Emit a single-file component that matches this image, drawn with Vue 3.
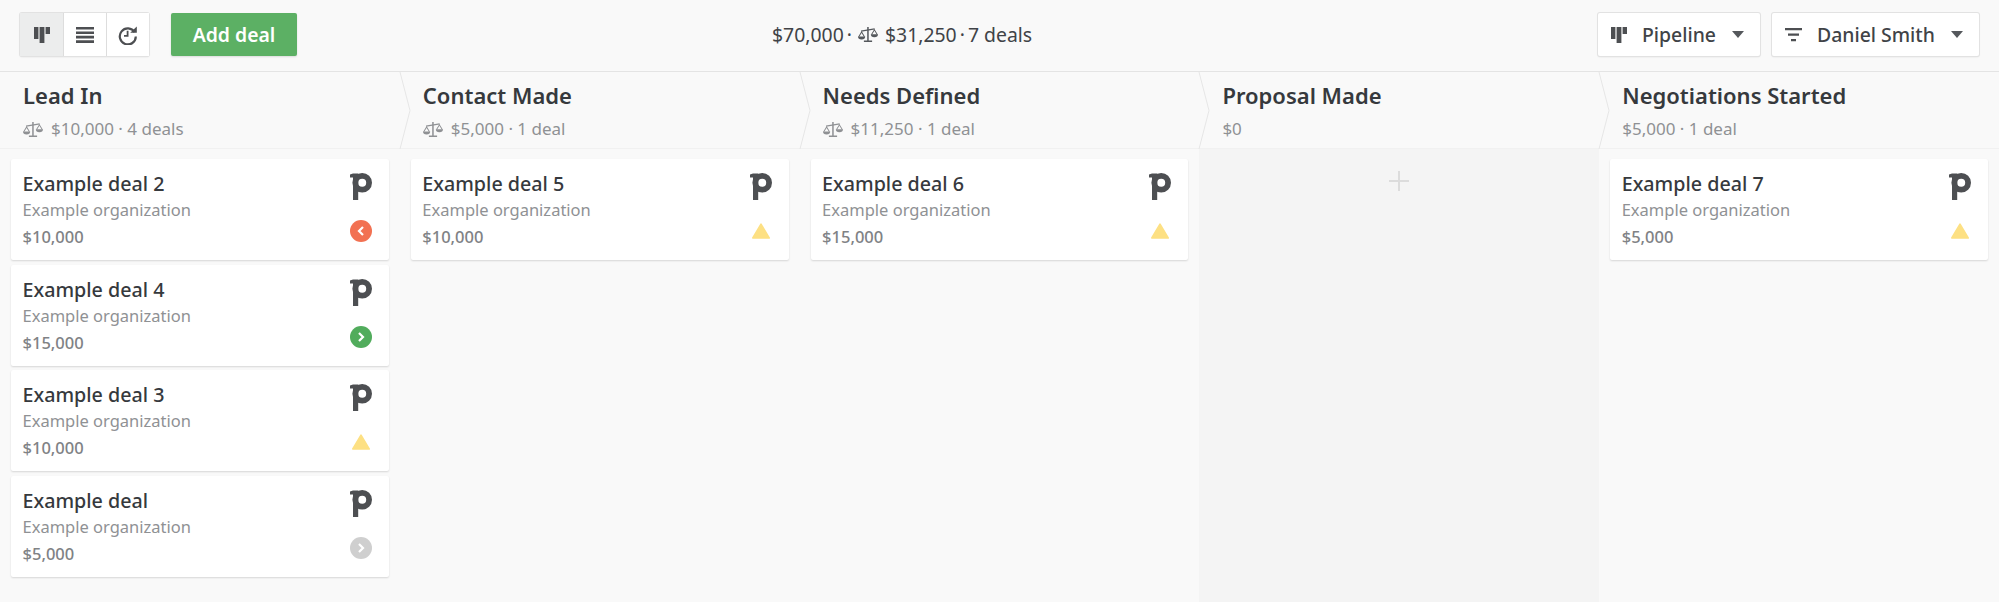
<template>
  <div class="page">
    <header class="topbar">
      <div class="left">
        <div class="views">
          <button type="button" class="view active" aria-label="Pipeline view">
            <svg width="16" height="16" viewBox="0 0 16 16"><path d="M0 0h4.4v12H0zM5.6 0h4.8v16H5.6zM11.6 0H16v7h-4.4z" /></svg>
          </button>
          <button type="button" class="view" aria-label="List view">
            <svg width="18" height="16" viewBox="0 0 18 16"><path d="M0 0h18v2.6H0zM0 4.4h18V7H0zM0 8.8h18v2.6H0zM0 13.2h18V16H0z" /></svg>
          </button>
          <button type="button" class="view" aria-label="Forecast view">
            <svg width="20" height="20" viewBox="0 0 20 20">
              <path class="line" d="M16.6 7.2A8 8 0 1 0 17.8 11.5" />
              <path d="M12.2 7.8h6.6V1.4z" />
              <path class="line thin" d="M9.6 5.8v5h-3.6" />
            </svg>
          </button>
        </div>
        <button type="button" class="add">Add deal</button>
      </div>
      <div class="summary">
        <span>$70,000</span><i>·</i>
        <svg class="scale" width="20" height="17" viewBox="0 0 20 17"><use href="#scales" /></svg>
        <span>$31,250</span><i>·</i><span>7 deals</span>
      </div>
      <div class="right">
        <button type="button" class="select pipeline">
          <svg width="16" height="16" viewBox="0 0 16 16"><path d="M0 0h4.4v12H0zM5.6 0h4.8v16H5.6zM11.6 0H16v7h-4.4z" /></svg>
          <span>Pipeline</span>
          <b class="caret"></b>
        </button>
        <button type="button" class="select owner">
          <svg width="17" height="14" viewBox="0 0 17 14"><path d="M0 0h17v2.2H0zM3 5.6h11v2.2H3zM6 11h5v2.2H6z" /></svg>
          <span>Daniel Smith</span>
          <b class="caret"></b>
        </button>
      </div>
    </header>

    <svg width="0" height="0" class="defs">
      <symbol id="scales" viewBox="0 0 20 17">
        <path d="M9.2 1h1.5v13.4h3.4V16H5.9v-1.6h3.3z" />
        <path d="M3 4.6 16.6 2.3l.2 1.1L3.2 5.7z" />
        <path d="M3.6 5 .2 10.8h1.1L3.6 7l2.3 3.8H7L3.6 5z" />
        <path d="M0 10.6h7.2a3.6 3 0 0 1-7.2 0z" />
        <path d="M16.4 3 13 8.4h1.1l2.3-3.6 2.3 3.6h1.1L16.4 3z" />
        <path d="M12.8 8.2H20a3.6 3 0 0 1-7.2 0z" />
      </symbol>
    </svg>

    <main class="board">
      <section v-for="stage in stages" :key="stage.name" class="stage" :class="{ empty: !stage.deals.length }">
        <div class="stage-head">
          <h2>{{ stage.name }}</h2>
          <p>
            <svg v-if="stage.weighted" class="scale" width="20" height="17" viewBox="0 0 20 17"><use href="#scales" /></svg>
            <span>{{ stage.meta }}</span>
          </p>
          <svg class="chevron" width="12" height="77" viewBox="0 0 12 77" fill="none">
            <path d="M1 0 11 38.5 1 77" />
          </svg>
        </div>
        <div class="stage-body">
          <article v-for="deal in stage.deals" :key="deal.title" class="deal">
            <div class="deal-text">
              <h3>{{ deal.title }}</h3>
              <div class="org">Example organization</div>
              <div class="value">{{ deal.value }}</div>
            </div>
            <div class="deal-side">
              <svg class="logo" width="22" height="28" viewBox="0 0 22 28" fill="none">
                <path d="M0 1.4 3 .4h5.2V27H3V4.6H0z" fill="#4d4f52" />
                <circle cx="12.2" cy="9.8" r="6.9" stroke="#4d4f52" stroke-width="5.8" />
              </svg>
              <svg v-if="deal.status === 'warn'" width="18" height="16" viewBox="0 0 18 16" class="warn"><path d="M9 1.2 17.2 15H.8z" /></svg>
              <span v-else class="status" :class="deal.status">
                <svg width="10" height="12" viewBox="0 0 10 12" fill="none">
                  <path :d="deal.status === 'late' ? 'M7 2 3 6l4 4' : 'M3 2l4 4-4 4'" />
                </svg>
              </span>
            </div>
          </article>
          <div v-if="!stage.deals.length" class="add-here">
            <svg width="20" height="20" viewBox="0 0 20 20"><path d="M9 0h2v9h9v2h-9v9H9v-9H0V9h9z" /></svg>
          </div>
        </div>
      </section>
    </main>
  </div>
</template>

<script setup>
const stages = [
  {
    name: 'Lead In',
    meta: '$10,000 · 4 deals',
    weighted: true,
    deals: [
      { title: 'Example deal 2', value: '$10,000', status: 'late' },
      { title: 'Example deal 4', value: '$15,000', status: 'ok' },
      { title: 'Example deal 3', value: '$10,000', status: 'warn' },
      { title: 'Example deal', value: '$5,000', status: 'none' },
    ],
  },
  {
    name: 'Contact Made',
    meta: '$5,000 · 1 deal',
    weighted: true,
    deals: [{ title: 'Example deal 5', value: '$10,000', status: 'warn' }],
  },
  {
    name: 'Needs Defined',
    meta: '$11,250 · 1 deal',
    weighted: true,
    deals: [{ title: 'Example deal 6', value: '$15,000', status: 'warn' }],
  },
  { name: 'Proposal Made', meta: '$0', weighted: false, deals: [] },
  {
    name: 'Negotiations Started',
    meta: '$5,000 · 1 deal',
    weighted: false,
    deals: [{ title: 'Example deal 7', value: '$5,000', status: 'warn' }],
  },
];
</script>

<style>
html,
body {
  margin: 0;
  background: #f9f9f9;
}
</style>

<style scoped>
.page {
  display: flex;
  flex-direction: column;
  height: 602px;
  overflow: hidden;
  background: #f9f9f9;
  color: #36393d;
  font-family: "Noto Sans", "Open Sans", sans-serif;
}

.defs {
  position: absolute;
}

button {
  font-family: inherit;
  cursor: pointer;
}

.topbar {
  display: flex;
  align-items: center;
  height: 72px;
  padding: 0 20px 2px;
  box-sizing: border-box;
  border-bottom: 1px solid #e4e4e4;
  background: #f9f9f9;
}

.left {
  display: flex;
  gap: 22px;
  width: 752px;
}

.views {
  display: flex;
  height: 43px;
  border-radius: 2px;
  box-shadow: 0 0 0 1px #e2e2e2, 0 1px 2px rgba(0, 0, 0, 0.12);
}

.view {
  display: flex;
  align-items: center;
  justify-content: center;
  width: 43px;
  padding: 0;
  border: 0;
  border-left: 1px solid #ddd;
  background: #fff;
}

.view:first-child {
  border-left: 0;
}

.view.active {
  background: #eceded;
}

.view svg,
.select svg {
  fill: #4d4f52;
}

.line {
  fill: none;
  stroke: #4d4f52;
  stroke-width: 2.2;
}

.thin {
  stroke-width: 1.8;
}

.add {
  width: 126px;
  height: 43px;
  border: 0;
  border-radius: 2px;
  background: #5cb064;
  box-shadow: 0 1px 2px rgba(0, 0, 0, 0.12);
  color: #fff;
  font-size: 19.4px;
  font-weight: 600;
}

.summary {
  display: flex;
  align-items: center;
  font-size: 19.4px;
  color: #404347;
}

.summary i {
  margin: 0 3px;
  font-style: normal;
}

.summary .scale {
  margin: 0 7px 0 3px;
  fill: #55585c;
}

.right {
  display: flex;
  flex: 1;
  justify-content: flex-end;
  gap: 12px;
}

.select {
  display: flex;
  align-items: center;
  height: 43px;
  padding: 0 16px 0 13px;
  border: 0;
  border-radius: 2px;
  background: #fff;
  box-shadow: 0 0 0 1px #e2e2e2, 0 1px 2px rgba(0, 0, 0, 0.12);
  color: #404347;
  font-size: 19.4px;
  font-weight: 500;
}

.pipeline {
  width: 162px;
}

.owner {
  width: 207px;
}

.select span {
  flex: 1;
  margin-left: 15px;
  text-align: left;
}

.caret {
  width: 0;
  height: 0;
  border-left: 6.5px solid transparent;
  border-right: 6.5px solid transparent;
  border-top: 7px solid #55585c;
}

.board {
  display: flex;
  flex: 1;
}

.stage {
  display: flex;
  flex: 1;
  flex-direction: column;
  min-width: 0;
}

.stage-head {
  position: relative;
  height: 77px;
  padding-left: 23px;
  box-sizing: border-box;
  border-bottom: 1px solid #f1f1f1;
}

h2 {
  margin: 0;
  padding-top: 8px;
  font-size: 22px;
  line-height: 30px;
  font-weight: 600;
  color: #36393d;
}

.stage-head p {
  display: flex;
  align-items: center;
  margin: 7px 0 0;
  font-size: 17px;
  line-height: 24px;
  color: #8f9194;
}

.stage-head .scale {
  margin-right: 8px;
  fill: #8f9194;
}

.chevron {
  position: absolute;
  top: 0;
  right: -11px;
  z-index: 1;
}

.chevron path {
  stroke: #e6e6e6;
  stroke-width: 1;
}

.stage:last-child .chevron {
  display: none;
}

.stage-body {
  display: flex;
  flex: 1;
  flex-direction: column;
  gap: 4.6px;
  padding: 10px 11px 0 11px;
}

.stage.empty .stage-body {
  background: #f4f4f4;
}

.deal {
  display: flex;
  justify-content: space-between;
  height: 101px;
  padding: 0 17px 0 11.5px;
  box-sizing: border-box;
  border-radius: 2px;
  background: #fff;
  box-shadow: 0 1px 2px rgba(0, 0, 0, 0.14);
}

h3 {
  margin: 11px 0 0;
  font-size: 19.7px;
  line-height: 28px;
  font-weight: 500;
  color: #36393d;
}

.org {
  font-size: 16.5px;
  line-height: 24px;
  color: #8f9194;
}

.value {
  margin-top: 2px;
  font-size: 16.5px;
  line-height: 25px;
  font-weight: 500;
  color: #808285;
}

.deal-side {
  display: flex;
  flex-direction: column;
  align-items: center;
  width: 22px;
}

.logo {
  flex: none;
  margin-top: 14px;
}

.status {
  display: flex;
  align-items: center;
  justify-content: center;
  width: 22px;
  height: 22px;
  margin-top: 19px;
  border-radius: 50%;
}

.status path {
  stroke: #fff;
  stroke-width: 2.2;
}

.late {
  background: #f27152;
}

.ok {
  background: #51ac5c;
}

.none {
  background: #cfcfcf;
}

.warn {
  margin-top: 22px;
  fill: #fde083;
  stroke: #fde083;
  stroke-width: 1.6;
  stroke-linejoin: round;
}

.add-here {
  display: flex;
  justify-content: center;
  padding-top: 12px;
}

.add-here svg {
  fill: #dcdcdc;
}
</style>
